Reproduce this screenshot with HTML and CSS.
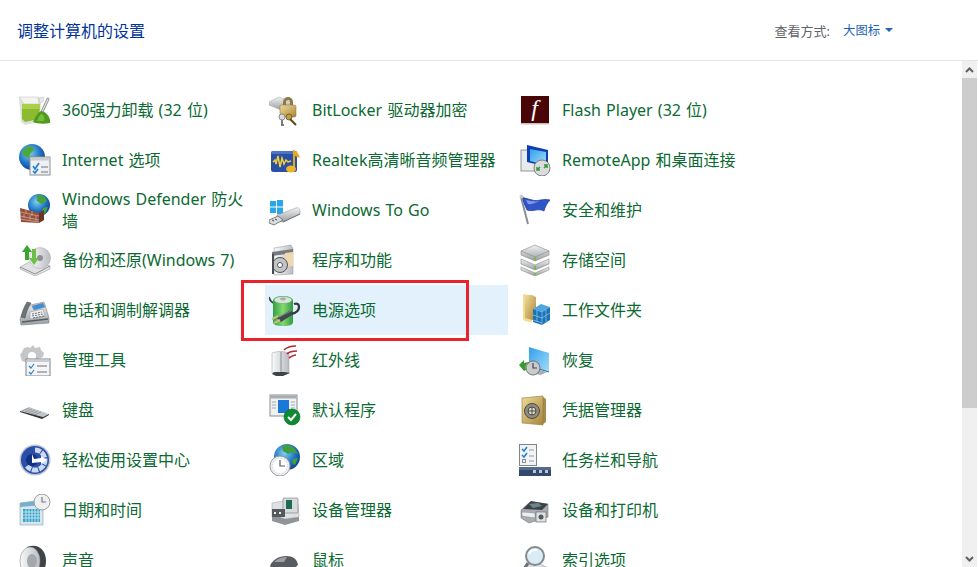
FILE: index.html
```html
<!DOCTYPE html>
<html lang="zh-CN">

<head>
    <meta charset="UTF-8">
    <meta name="viewport" content="width=device-width, initial-scale=1.0">
    <title>所有控制面板项</title>
    <link rel="stylesheet" href="styles.css">
</head>

<body>
    <!-- Shared gradients for the icons -->
    <svg class="defs" width="0" height="0" aria-hidden="true">
        <defs>
            <radialGradient id="globe" cx="0.4" cy="0.35" r="0.7">
                <stop offset="0" stop-color="#7fd0f0" />
                <stop offset="0.6" stop-color="#1f72c4" />
                <stop offset="1" stop-color="#123f86" />
            </radialGradient>
            <linearGradient id="steel" x1="0" y1="0" x2="0" y2="1">
                <stop offset="0" stop-color="#f1f2f3" />
                <stop offset="1" stop-color="#9a9ea3" />
            </linearGradient>
            <linearGradient id="paleSteel" x1="0" y1="0" x2="1" y2="0">
                <stop offset="0" stop-color="#fafafa" />
                <stop offset="1" stop-color="#b9bcc0" />
            </linearGradient>
            <linearGradient id="gold" x1="0" y1="0" x2="1" y2="1">
                <stop offset="0" stop-color="#f0dc96" />
                <stop offset="1" stop-color="#a9843a" />
            </linearGradient>
            <linearGradient id="sky" x1="0" y1="0" x2="1" y2="1">
                <stop offset="0" stop-color="#2f9fec" />
                <stop offset="1" stop-color="#a5dcf7" />
            </linearGradient>
            <linearGradient id="leaf" x1="0" y1="0" x2="1" y2="0">
                <stop offset="0" stop-color="#2f9f45" />
                <stop offset="0.5" stop-color="#86d86f" />
                <stop offset="1" stop-color="#2d9a45" />
            </linearGradient>
        </defs>
    </svg>

    <!-- Top bar -->
    <header class="top-bar">
        <h1 class="page-title">调整计算机的设置</h1>
        <div class="view-by">
            <span class="view-label">查看方式:</span>
            <a class="view-value">大图标<span class="view-caret"></span></a>
        </div>
    </header>

    <div class="scroll-area">
        <main class="items">

            <!-- Row 1 -->
            <a class="item">
                <svg class="icon" viewBox="0 0 32 32">
                    <path d="M0 3h20l2 7-2 18-14 3-4-3z" fill="#dfe0dc" />
                    <path d="M0 3l5 7h15l-1-7z" fill="#f3f3f0" stroke="#bdbdb7" stroke-width=".5" />
                    <path d="M3 10h18l-1 15-14 3-3-3z" fill="#8dbb2e" />
                    <path d="M3 10h18v5H3z" fill="#a9d04a" />
                    <path d="M20 4l5-1-1 5-3 1z" fill="#e8e8e4" stroke="#b5b5b0" stroke-width=".4" />
                    <path d="M29 5l-6 13" stroke="#9d9f9c" stroke-width="3" stroke-linecap="round" />
                    <path d="M29 5l-6 13" stroke="#eceded" stroke-width="1" stroke-linecap="round" />
                    <path d="M22 17c-4 2-6 7-8 11 5 2 12 2 17 1 1-5-3-11-9-12z" fill="#4f9a22" />
                    <path d="M22 20c-2 2-3 5-4 7h7c1-3 0-6-3-7z" fill="#79bd34" />
                </svg>
                <span class="item-name">360强力卸载 (32 位)</span>
            </a>
            <a class="item">
                <svg class="icon" viewBox="0 0 32 32">
                    <path d="M0 8l10-5 12 5v3l-10 5L0 11z" fill="url(#steel)" stroke="#9da0a3" stroke-width=".5" />
                    <path d="M14 8a5 5 0 0 1 10 0v5h-3V8a2 2 0 0 0-4 0v5h-3z" fill="#8f7a45" />
                    <rect x="11" y="11" width="16" height="12" rx="1.500" fill="url(#gold)" stroke="#8a6c2c" stroke-width=".5" />
                    <circle cx="13" cy="23" r="3" fill="#d8dadb" stroke="#74777a" stroke-width=".8" />
                    <path d="M13 26v5h2" stroke="#777b7e" stroke-width="2" fill="none" />
                    <circle cx="20" cy="23" r="3" fill="#c49b45" stroke="#6d5420" stroke-width=".8" />
                    <path d="M21 25l6 6" stroke="#5a4517" stroke-width="2" />
                </svg>
                <span class="item-name">BitLocker 驱动器加密</span>
            </a>
            <a class="item">
                <svg class="icon" viewBox="0 0 32 32">
                    <rect x="2" y="2" width="28" height="27" fill="#4a0606" />
                    <rect x="2" y="29" width="28" height="1.500" fill="#c9bdbd" />
                    <text class="flash-letter" x="15.500" y="22" text-anchor="middle">f</text>
                </svg>
                <span class="item-name">Flash Player (32 位)</span>
            </a>

            <!-- Row 2 -->
            <a class="item">
                <svg class="icon" viewBox="0 0 32 32">
                    <circle cx="13" cy="13" r="13" fill="url(#globe)" />
                    <path d="M7 3c4-2 8 0 8 3l-4 4-1 4-5-2-2-4zM16 12l6 1 2 4-5 5-3-3z" fill="#4da83c" />
                    <rect x="11" y="13" width="20" height="18" fill="#eef0f2" stroke="#8d9094" />
                    <rect x="11.500" y="13.500" width="19" height="3" fill="#c8cbd0" />
                    <path d="M14 22l2 3 4-6M14 27l2 2 3-4" stroke="#1d7fd0" stroke-width="1.600" fill="none" />
                    <path d="M22 23h7M22 28h7" stroke="#71767a" />
                </svg>
                <span class="item-name">Internet 选项</span>
            </a>
            <a class="item">
                <svg class="icon" viewBox="0 0 32 32">
                    <rect x="2" y="7" width="26" height="21" rx="2.500" fill="#2a4fa6" />
                    <rect x="2" y="7" width="26" height="3" rx="1.500" fill="#4c74c8" />
                    <path d="M4 18l2-2 1 4 2-8 2 11 2-9 2 6 2-4 2 2 3-1" stroke="#f2cf3a" stroke-width="1.500" fill="none" />
                    <path d="M23 5c2 1 7 3 8 9l-5-2v12h-2V6z" fill="#e6a91f" />
                    <ellipse cx="22" cy="25" rx="5" ry="3.500" fill="#f0b429" />
                </svg>
                <span class="item-name">Realtek高清晰音频管理器</span>
            </a>
            <a class="item">
                <svg class="icon" viewBox="0 0 32 32">
                    <rect x="2" y="6" width="22" height="21" fill="#e9eaec" stroke="#92959a" />
                    <path d="M8 1l21 5v17L8 18z" fill="#0c3fb5" />
                    <path d="M11 5l16 3v13l-16-4z" fill="url(#sky)" />
                    <circle cx="23" cy="24" r="8" fill="#dadcde" stroke="#7d8084" />
                    <path d="M18 26l3-3M21 26h-3v-3M28 21l-3 3M25 21h3v3" stroke="#2d9a35" stroke-width="1.500" fill="none" />
                </svg>
                <span class="item-name">RemoteApp 和桌面连接</span>
            </a>

            <!-- Row 3 -->
            <a class="item">
                <svg class="icon" viewBox="0 0 32 32">
                    <circle cx="20" cy="11" r="11" fill="url(#globe)" />
                    <path d="M18 1c5-1 9 3 10 6l-5 3-5-3zM24 14l5-1-3 7-3-2z" fill="#46a43b" />
                    <path d="M1 14l19 5v10L2 28z" fill="#96503a" />
                    <path d="M20 19l5-3v10l-5 3z" fill="#6c3527" />
                    <path d="M1 18l19 4M1 22l19 4M1 25l19 3M7 15v4M13 17v5M5 20v4M11 21v5M17 22v5" stroke="#d4b5a7" stroke-width=".7" />
                </svg>
                <span class="item-name">Windows Defender 防火墙</span>
            </a>
            <a class="item">
                <svg class="icon" viewBox="0 0 32 32">
                    <rect x="1" y="7" width="6" height="5.500" fill="#2aa7e8" />
                    <rect x="8" y="6" width="6" height="6.500" fill="#2aa7e8" />
                    <rect x="1" y="13.500" width="6" height="5.500" fill="#2aa7e8" />
                    <rect x="8" y="13.500" width="6" height="6.500" fill="#2aa7e8" />
                    <path d="M8 21l19-7c3-1 4 1 4 3v3L14 28l-4-1z" fill="url(#steel)" stroke="#8d9094" stroke-width=".5" />
                    <path d="M14 28l17-8" stroke="#6d7073" />
                    <path d="M0 26l9-4 5 4-9 5-5-2z" fill="#d8dadc" stroke="#63676b" stroke-width=".8" />
                    <path d="M3 26l2 1M6 25l2 1" stroke="#3f4245" />
                </svg>
                <span class="item-name">Windows To Go</span>
            </a>
            <a class="item">
                <svg class="icon" viewBox="0 0 32 32">
                    <path d="M2 3l11 3c6 2 11-2 18 0-3 3-5 7-6 11-6-3-11 1-17-1z" fill="#2f55c8" stroke="#18338d" stroke-width=".7" />
                    <path d="M7 6c5 1 9 2 13 1-4 2-8 4-11 3z" fill="#7f97e8" />
                    <path d="M2 3l7 27" stroke="#8a8f96" stroke-width="2" />
                    <circle cx="2.500" cy="2.500" r="2" fill="#c9ccd0" />
                </svg>
                <span class="item-name">安全和维护</span>
            </a>

            <!-- Row 4 -->
            <a class="item">
                <svg class="icon" viewBox="0 0 32 32">
                    <path d="M1 23l15-8 15 7v3l-15 7-15-7z" fill="#dfe1e2" stroke="#8f9295" stroke-width=".5" />
                    <path d="M1 23l15 7 15-8" stroke="#8f9295" fill="none" />
                    <circle cx="21" cy="14" r="10.500" fill="url(#paleSteel)" stroke="#a0a3a6" stroke-width=".5" />
                    <circle cx="21" cy="14" r="3" fill="#8b8f93" />
                    <path d="M8 1l-5 7h3v8h4V8h3z" fill="#3aa52e" />
                    <path d="M15 21l5-7h-3V5h-4v9h-3z" fill="#6cc043" />
                </svg>
                <span class="item-name">备份和还原(Windows 7)</span>
            </a>
            <a class="item">
                <svg class="icon" viewBox="0 0 32 32">
                    <path d="M5 4l17-3 2 4v25l-19 1z" fill="url(#paleSteel)" stroke="#8d9094" stroke-width=".5" />
                    <path d="M3 8l21-3v4l-21 3z" fill="#777a7e" />
                    <path d="M16 9l8-1v14l-8 1z" fill="#f0d8ae" />
                    <circle cx="11" cy="21" r="7.500" fill="#c2c4c6" stroke="#4f5256" />
                    <circle cx="11" cy="21" r="2.500" fill="#fff" stroke="#55585b" />
                    <rect x="3" y="10" width="2" height="20" fill="#4a4d50" />
                </svg>
                <span class="item-name">程序和功能</span>
            </a>
            <a class="item">
                <svg class="icon" viewBox="0 0 32 32">
                    <path d="M2 7l14-6 14 6v4l-14 6-14-6z" fill="url(#steel)" stroke="#858a85" stroke-width=".6" />
                    <path d="M2 15l14 6 14-6v5l-14 6-14-6z" fill="url(#steel)" stroke="#858a85" stroke-width=".6" />
                    <path d="M2 23l14 6 14-6v3l-14 6-14-6z" fill="url(#steel)" stroke="#858a85" stroke-width=".6" />
                    <path d="M2 7l14 6 14-6" stroke="#858a85" fill="none" stroke-width=".6" />
                    <path d="M16 13v3M16 22v3M16 29v2" stroke="#70c23a" stroke-width="2" />
                </svg>
                <span class="item-name">存储空间</span>
            </a>

            <!-- Row 5 -->
            <a class="item">
                <svg class="icon" viewBox="0 0 32 32">
                    <path d="M1 25l6-13 18-4 5 16v5L2 31z" fill="url(#steel)" stroke="#7b7f84" stroke-width=".6" />
                    <path d="M8 8c-3 5-5 10-6 15l4 1c1-5 3-10 6-15z" fill="#6e7378" stroke="#4c5054" stroke-width=".5" />
                    <path d="M13 12l11-3 2 4-11 3z" fill="#3c8fd8" stroke="#6b8096" stroke-width=".5" />
                    <path d="M11 18l13-3 2 7-15 3z" fill="#eef0f2" stroke="#8a8e92" stroke-width=".5" />
                    <path d="M13 20l10-2M13 22l11-2M14 24l11-2" stroke="#6e7378" stroke-dasharray="2 1" />
                    <path d="M3 28l26-3" stroke="#575b60" stroke-width="1.500" />
                </svg>
                <span class="item-name">电话和调制解调器</span>
            </a>
            <a class="item item-selected">
                <svg class="icon" viewBox="0 0 32 32">
                    <path d="M0 3c1 4 3 6 6 6" stroke="#3d4347" stroke-width="1.800" fill="none" />
                    <path d="M4 7c0-3 4-5 10-5s10 2 10 5v21c0 3-4 4-10 4S4 31 4 28z" fill="url(#leaf)" />
                    <ellipse cx="14" cy="6" rx="9" ry="3.500" fill="#d8e5d6" stroke="#6da776" stroke-width=".6" />
                    <ellipse cx="14" cy="5" rx="3" ry="1.400" fill="#a6aca7" />
                    <path d="M22 20c5-1 8-3 8-7 0-3-2-4-5-3" stroke="#35393d" stroke-width="2.300" fill="none" />
                    <path d="M8 24l12-7c3-1 4 2 3 4l-11 7z" fill="#43484c" />
                    <path d="M10 23l12-6" stroke="#858b90" />
                    <path d="M3 25l6-3M5 29l6-3" stroke="#c9bd86" stroke-width="2" />
                </svg>
                <span class="item-name">电源选项</span>
                <span class="callout"></span>
            </a>
            <a class="item">
                <svg class="icon" viewBox="0 0 32 32">
                    <path d="M4 0c4 1 7 1 9 1v27c-4 0-7 0-9-3z" fill="#f3dc8c" />
                    <path d="M6 1h7l4 2v24l-11-3z" fill="url(#gold)" />
                    <path d="M14 15l9 3 8-5v13l-8 5-9-3z" fill="#1d71b5" />
                    <path d="M14 21l9 3 8-5M14 26l9 3M18 16v12M23 18v13M27 16v12" stroke="#7fc4ea" stroke-width=".8" fill="none" />
                    <path d="M14 15l8-5 9 3-8 5z" fill="#4da6e0" />
                </svg>
                <span class="item-name">工作文件夹</span>
            </a>

            <!-- Row 6 -->
            <a class="item">
                <svg class="icon" viewBox="0 0 32 32">
                    <path d="M14 1l2 3 5-1 1 3 3 3-1 4-7 3-8 3-6-2-2-6 2-3 2-4 4-1 2 1z" fill="#c4c6c9" />
                    <circle cx="13" cy="12" r="4" fill="#fff" />
                    <rect x="7" y="15" width="24" height="17" fill="#f4f5f6" stroke="#7f8488" />
                    <rect x="7.500" y="15.500" width="23" height="2.500" fill="#c9ccd0" />
                    <path d="M10 22l2 2 3-4M10 28l2 2 3-4" stroke="#2c83d2" stroke-width="1.200" fill="none" />
                    <path d="M18 22h10M18 28h10" stroke="#6d7175" />
                </svg>
                <span class="item-name">管理工具</span>
            </a>
            <a class="item">
                <svg class="icon" viewBox="0 0 32 32">
                    <path d="M3 9c5-2 12-2 17 0v20l-6 2H8l-5-2z" fill="url(#paleSteel)" stroke="#999c9f" stroke-width=".5" />
                    <path d="M12 8v22" stroke="#8a8d90" />
                    <path d="M5 28h11l5 1-7 3H7l-4-2z" fill="#414447" />
                    <path d="M15 6c3-3 8-4 12-4M18 10c3-3 7-3 10-3M20 14c3-2 5-3 7-3" stroke="#b52c34" stroke-width="1.700" fill="none" />
                </svg>
                <span class="item-name">红外线</span>
            </a>
            <a class="item">
                <svg class="icon" viewBox="0 0 32 32">
                    <path d="M10 3l20 6v19l-20-6z" fill="url(#sky)" />
                    <path d="M10 22l20 6" stroke="#1d639c" />
                    <path d="M14 24l14 4-6 3-11-2z" fill="#aaadb0" />
                    <circle cx="14" cy="24" r="7" fill="#c9cbcd" stroke="#6f7376" />
                    <path d="M14 19v5h4" stroke="#43474a" stroke-width="1.200" fill="none" />
                    <path d="M0 21l5-5v3c3-1 5-1 6 0-4 0-5 3-4 7l-2 1z" fill="#359b2c" />
                </svg>
                <span class="item-name">恢复</span>
            </a>

            <!-- Row 7 -->
            <a class="item">
                <svg class="icon" viewBox="0 0 32 32">
                    <path d="M1 17l9-4 20 7-6 3z" fill="#c3c6c9" />
                    <path d="M3 17l7-3M6 18l7-3M9 19l7-3M12 20l7-3M15 21l7-3" stroke="#8d9094" stroke-width=".8" />
                    <path d="M1 17l23 6 6-3v1l-7 4-22-7z" fill="#33363a" />
                </svg>
                <span class="item-name">键盘</span>
            </a>
            <a class="item">
                <svg class="icon" viewBox="0 0 32 32">
                    <rect x="1" y="1" width="27" height="21" fill="#eef0f2" stroke="#8b8f93" />
                    <rect x="1.500" y="1.500" width="26" height="3" fill="#a9adb2" />
                    <rect x="9" y="6" width="11" height="13" fill="#1a78d8" />
                    <path d="M3 8h4M3 11h4M3 14h4M22 8h4M22 11h4M22 14h4" stroke="#a8abaf" />
                    <circle cx="23" cy="23" r="8" fill="#0d8a33" stroke="#0a6b27" stroke-width=".6" />
                    <path d="M19 23l3 3 5-6" stroke="#fff" stroke-width="2" fill="none" />
                </svg>
                <span class="item-name">默认程序</span>
            </a>
            <a class="item">
                <svg class="icon" viewBox="0 0 32 32">
                    <path d="M24 3l3 2v23l-3 2z" fill="#a58a4f" />
                    <path d="M3 4l21-2v29L3 29z" fill="url(#gold)" stroke="#8e7a48" stroke-width=".6" />
                    <circle cx="13" cy="17" r="7.500" fill="#8e8c80" stroke="#4d4b43" />
                    <circle cx="13" cy="17" r="4" fill="#dedcd0" stroke="#4d4b43" />
                    <path d="M13 13v8M9 17h8" stroke="#4d4b43" />
                </svg>
                <span class="item-name">凭据管理器</span>
            </a>

            <!-- Row 8 -->
            <a class="item">
                <svg class="icon" viewBox="0 0 32 32">
                    <circle cx="16" cy="16" r="15.500" fill="#bfc4d0" />
                    <circle cx="16" cy="16" r="14" fill="#2a4fa8" />
                    <path d="M16 6a10 10 0 1 1-8 16" stroke="#cdd9f0" stroke-width="5" fill="none" stroke-dasharray="6 1" />
                    <circle cx="13" cy="16" r="6" fill="#12327f" />
                    <path d="M13 10l2 5 7-1v-2l6 4-6 4v-2l-9 1z" fill="#fff" />
                </svg>
                <span class="item-name">轻松使用设置中心</span>
            </a>
            <a class="item">
                <svg class="icon" viewBox="0 0 32 32">
                    <circle cx="18" cy="13" r="13" fill="url(#globe)" />
                    <path d="M13 2c4-2 10-1 13 3l3 5-6-2-4 2-5-3zM24 15l5-1-3 7-3-2z" fill="#3f9f3d" />
                    <circle cx="11" cy="22" r="10" fill="#eceef0" stroke="#9a9da1" />
                    <circle cx="11" cy="22" r="7.500" fill="#fff" stroke="#c9cccf" stroke-dasharray="1 2" />
                    <path d="M11 16v6h5" stroke="#55595d" stroke-width="1.200" fill="none" />
                </svg>
                <span class="item-name">区域</span>
            </a>
            <a class="item">
                <svg class="icon" viewBox="0 0 32 32">
                    <rect x="0.500" y="0.500" width="17" height="21" fill="#f1f3f4" stroke="#80858a" />
                    <path d="M3 5l2 2 3-4M3 11l2 2 3-4" stroke="#1f7fd6" stroke-width="1.500" fill="none" />
                    <rect x="3.500" y="15.500" width="3" height="3" fill="none" stroke="#8a8f93" />
                    <path d="M10 6h5M10 12h5M10 17h5" stroke="#9a9da1" />
                    <rect x="0" y="23" width="32" height="9" fill="#33486d" />
                    <rect x="0" y="23" width="32" height="3" fill="#566a8d" />
                    <path d="M14 26h3v3h-3zM20 26h3v3h-3zM26 26h3v3h-3z" fill="#bcc4d2" />
                </svg>
                <span class="item-name">任务栏和导航</span>
            </a>

            <!-- Row 9 -->
            <a class="item">
                <svg class="icon" viewBox="0 0 32 32">
                    <path d="M1 9l23-3v25H1z" fill="#d8e6ee" stroke="#8ca0ad" stroke-width=".6" />
                    <path d="M1 9l23-3v5l-23 2z" fill="#79aecd" />
                    <path d="M4 15h17v13H4z" fill="#38a2cb" />
                    <path d="M4 18h17M4 21h17M4 24h17M7 15v13M10 15v13M13 15v13M16 15v13M19 15v13" stroke="#dceff6" stroke-width=".8" />
                    <circle cx="23" cy="8" r="8" fill="#eef0f1" stroke="#9a9da1" />
                    <path d="M23 3v5h4" stroke="#777b7f" stroke-width="1.200" fill="none" />
                </svg>
                <span class="item-name">日期和时间</span>
            </a>
            <a class="item">
                <svg class="icon" viewBox="0 0 32 32">
                    <path d="M3 9l11-2 15 3 1 13-14 2-13-2z" fill="#dfe1e3" stroke="#9a9da0" stroke-width=".5" />
                    <path d="M3 20l13 5 14-2v4l-14 4-13-4z" fill="#909498" />
                    <rect x="14" y="4" width="15" height="15" rx="1" fill="#d8dadc" stroke="#75787c" stroke-width=".6" />
                    <rect x="17" y="6" width="6" height="9" fill="#1c6c54" />
                    <rect x="3" y="15" width="13" height="8" fill="#55595d" />
                    <path d="M5 19h2M10 19h2" stroke="#eee" stroke-width="2" />
                </svg>
                <span class="item-name">设备管理器</span>
            </a>
            <a class="item">
                <svg class="icon" viewBox="0 0 32 32">
                    <path d="M2 16l9-8 18 2v13l-19 6-8-5z" fill="#a9adb1" stroke="#64686c" stroke-width=".5" />
                    <path d="M4 15l8-8 17 3-6 6z" fill="#3d4246" />
                    <path d="M10 10l9-1 4 3-9 2z" fill="#6b8590" />
                    <path d="M3 18l13 1v5l-13-2z" fill="#eceeef" stroke="#74787c" stroke-width=".4" />
                    <rect x="17" y="18" width="10" height="10" fill="#dfe1e3" stroke="#585c60" stroke-width=".6" />
                    <circle cx="22" cy="23" r="2.500" fill="#55595d" />
                </svg>
                <span class="item-name">设备和打印机</span>
            </a>

            <!-- Row 10 -->
            <a class="item">
                <svg class="icon" viewBox="0 0 32 32">
                    <path d="M8 3c11-4 19 3 19 14s-8 17-19 13z" fill="#3f4246" />
                    <ellipse cx="11" cy="17" rx="10" ry="14" fill="url(#paleSteel)" stroke="#8b8f93" stroke-width=".6" />
                    <ellipse cx="13" cy="17" rx="5" ry="7" fill="#a4a8ac" />
                </svg>
                <span class="item-name">声音</span>
            </a>
            <a class="item">
                <svg class="icon" viewBox="0 0 32 32">
                    <path d="M1 22c2-6 9-10 16-10s11 3 12 9l-8 7H6z" fill="#585c60" />
                    <path d="M5 18c4-4 9-5 13-5l-3 5z" fill="#9ca0a4" />
                </svg>
                <span class="item-name">鼠标</span>
            </a>
            <a class="item">
                <svg class="icon" viewBox="0 0 32 32">
                    <path d="M1 25l11-5h9l10 5v5H1z" fill="url(#steel)" stroke="#85898d" stroke-width=".6" />
                    <circle cx="16" cy="12" r="9" fill="#d8ecf6" stroke="#85898d" stroke-width="2" />
                    <path d="M10 10a7 7 0 0 1 8-4" stroke="#fff" stroke-width="2" fill="none" />
                    <path d="M9 19l-4 6" stroke="#6c7074" stroke-width="3" />
                </svg>
                <span class="item-name">索引选项</span>
            </a>
        </main>

        <!-- Fake scrollbar, the frame clips the list -->
        <div class="scrollbar">
            <span class="scroll-btn">
                <svg class="scroll-arrow" viewBox="0 0 9 6">
                    <path d="M1 5l3.500-3.500L8 5" />
                </svg>
            </span>
            <span class="scroll-thumb"></span>
            <span class="scroll-rest"></span>
            <span class="scroll-btn">
                <svg class="scroll-arrow" viewBox="0 0 9 6">
                    <path d="M1 1l3.500 3.500L8 1" />
                </svg>
            </span>
        </div>
    </div>
</body>

</html>
```

FILE: styles.css
```css
html,
body {
    height: 100%;
}

body {
    margin: 0;
    display: flex;
    flex-direction: column;
    overflow: hidden;
    background-color: #fff;
    font-family: "Noto Sans", "Noto Sans CJK SC", sans-serif;
}

.defs {
    position: absolute;
}

/* Top bar */
.top-bar {
    flex: none;
    height: 60px;
    display: flex;
    justify-content: space-between;
    align-items: center;
    padding: 0 85px 0 17px;
    border-bottom: 1px solid #e2e4e8;
}

.page-title {
    margin: 0;
    font-size: 16px;
    font-weight: normal;
    color: #003399;
}

.view-by {
    display: flex;
    align-items: center;
    gap: 13px;
    font-size: 13px;
}

.view-label {
    color: #5f6468;
}

.view-value {
    display: flex;
    align-items: center;
    gap: 5px;
    font-size: 12.3px;
    color: #1e62b0;
}

.view-caret {
    border-left: 4px solid transparent;
    border-right: 4px solid transparent;
    border-top: 4px solid #1e62b0;
}

/* Item grid */
.scroll-area {
    flex: 1;
    min-height: 0;
    display: flex;
}

.items {
    flex: 1;
    min-width: 0;
    overflow: hidden;
    align-self: stretch;
    display: grid;
    grid-template-columns: repeat(3, 243px);
    grid-auto-rows: 50px;
    column-gap: 7px;
    align-content: start;
    padding: 24px 0 0 15px;
}

.item {
    position: relative;
    display: flex;
    align-items: center;
    gap: 11px;
    padding-left: 4px;
    padding-right: 8px;
}

.item-selected {
    background-color: #e2f1fc;
}

.icon {
    flex: none;
    width: 32px;
    height: 32px;
}

.item-name {
    font-size: 16px;
    line-height: 22px;
    word-spacing: 1px;
    color: #0b6a32;
}

.flash-letter {
    font-family: "Liberation Serif", serif;
    font-size: 24px;
    font-style: italic;
    fill: #fff;
}

/* Red box drawn over the selected item */
.callout {
    position: absolute;
    left: -24px;
    top: -5px;
    width: 222px;
    height: 55px;
    border: 3px solid #e8232b;
}

/* Scrollbar */
.scrollbar {
    flex: none;
    width: 15px;
    margin-right: 1px;
    display: flex;
    flex-direction: column;
    background-color: #f0f0f0;
}

.scroll-btn {
    flex: none;
    height: 17px;
    display: flex;
    align-items: center;
    justify-content: center;
}

.scroll-arrow {
    width: 9px;
    height: 6px;
    fill: none;
    stroke: #606060;
    stroke-width: 2;
}

.scroll-thumb {
    flex: none;
    height: 330px;
    background-color: #cdcdcd;
}

.scroll-rest {
    flex: 1;
}
```
